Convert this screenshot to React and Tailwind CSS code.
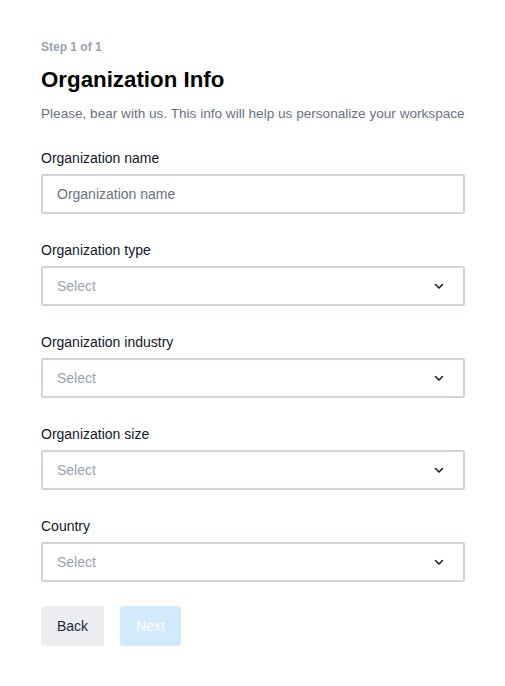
const fields = [
  "Organization type",
  "Organization industry",
  "Organization size",
  "Country",
];

const Chevron = () => (
  <svg width="12" height="12" viewBox="0 0 12 12" fill="none" className="text-gray-900">
    <path d="M2.5 4.5L6 8l3.5-3.5" stroke="currentColor" strokeWidth="1.5" strokeLinecap="round" strokeLinejoin="round" />
  </svg>
);

const App = () => {
  return (
    <div
      className="min-h-screen bg-white px-[41px] pt-[39px] text-gray-900"
      style={{ fontFamily: '"Liberation Sans", Arial, sans-serif' }}
    >
      <div className="w-[424px]">
        <p className="text-[12px] font-bold leading-[16px] text-gray-400">Step 1 of 1</p>
        <h1 className="mt-[11px] text-[22.3px] font-bold leading-[28px] text-black">
          Organization Info
        </h1>
        <p className="mt-[10px] whitespace-nowrap text-[13.6px] leading-[20px] text-gray-500">
          Please, bear with us. This info will help us personalize your workspace
        </p>

        <div className="mt-[24px] flex flex-col gap-[26px]">
          <div className="flex flex-col gap-[6px]">
            <label className="text-[14px] leading-[20px] text-gray-900">Organization name</label>
            <input
              type="text"
              placeholder="Organization name"
              className="h-[40px] w-full rounded-[2px] border-2 border-[#d1d5db] px-[14px] text-[14px] text-gray-900 outline-none placeholder:text-gray-500"
            />
          </div>

          {fields.map((label) => (
            <div key={label} className="flex flex-col gap-[6px]">
              <label className="text-[14px] leading-[20px] text-gray-900">{label}</label>
              <button
                type="button"
                className="flex h-[40px] w-full items-center justify-between rounded-[2px] border-2 border-[#d1d5db] pl-[14px] pr-[18px] text-left text-[14px] text-gray-400"
              >
                <span>Select</span>
                <Chevron />
              </button>
            </div>
          ))}
        </div>

        <div className="mt-[24px] flex gap-[16px]">
          <button className="h-[40px] rounded-[3px] bg-[#eceef1] px-[16px] text-[14px] text-gray-800">
            Back
          </button>
          <button disabled className="h-[40px] rounded-[3px] bg-[#d1eafe] px-[16px] text-[14px] text-white">
            Next
          </button>
        </div>
      </div>
    </div>
  );
};

export default App;
